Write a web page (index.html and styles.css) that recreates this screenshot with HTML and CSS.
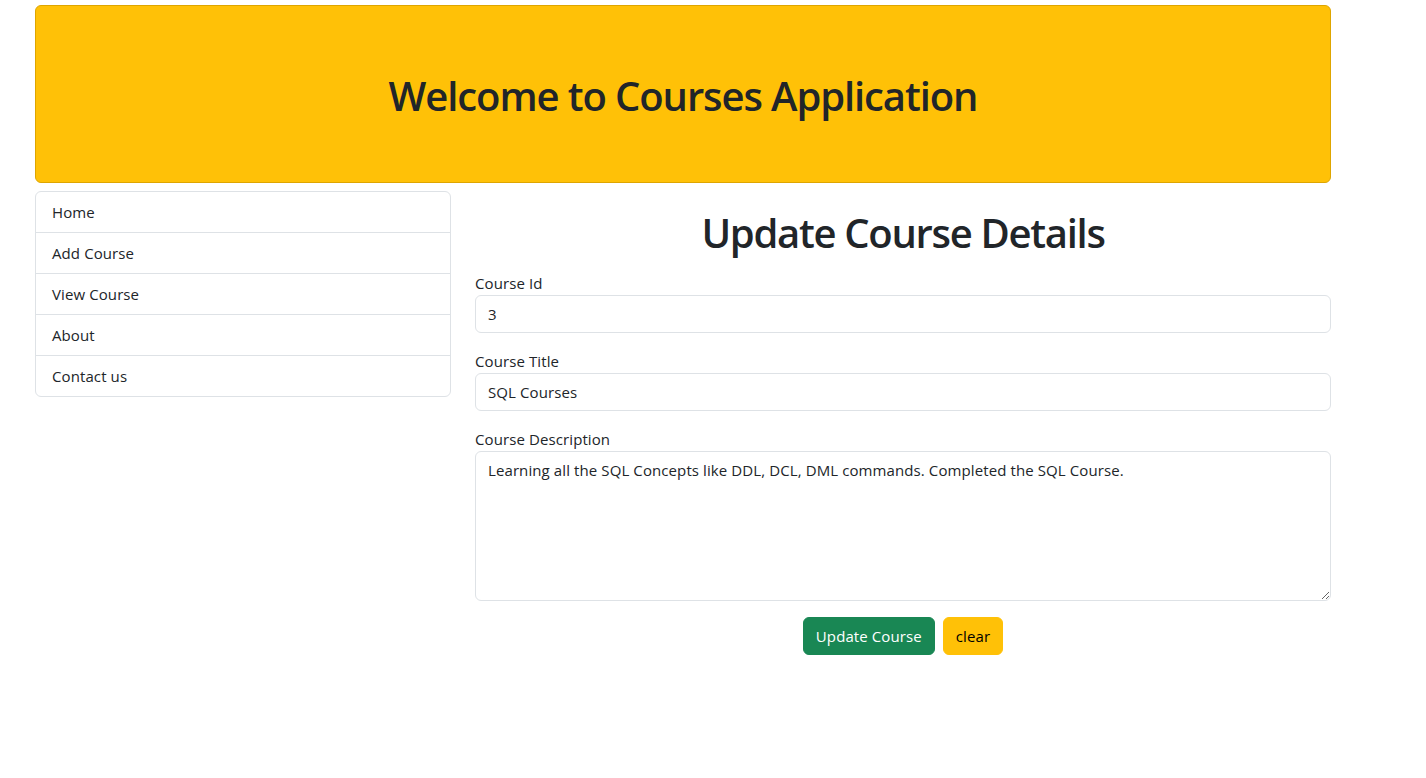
FILE: index.html
```html
<!DOCTYPE html>
<html lang="en">
<head>
<meta charset="utf-8">
<title>Courses Application</title>
<link rel="stylesheet" href="styles.css">
</head>
<body>
<div class="container">
  <header class="jumbotron">
    <h1 class="jumbo-title">Welcome to Courses Application</h1>
  </header>
  <div class="row">
    <aside class="col-side">
      <nav class="list-group">
        <a class="list-item" href="#">Home</a>
        <a class="list-item" href="#">Add Course</a>
        <a class="list-item" href="#">View Course</a>
        <a class="list-item" href="#">About</a>
        <a class="list-item" href="#">Contact us</a>
      </nav>
    </aside>
    <main class="col-main">
      <h1 class="page-title">Update Course Details</h1>
      <form class="form">
        <div class="field">
          <label class="label" for="cid">Course Id</label>
          <input class="control" id="cid" type="text" value="3">
        </div>
        <div class="field">
          <label class="label" for="ctitle">Course Title</label>
          <input class="control" id="ctitle" type="text" value="SQL Courses">
        </div>
        <div class="field">
          <label class="label" for="cdesc">Course Description</label>
          <textarea class="control textarea" id="cdesc">Learning all the SQL Concepts like DDL, DCL, DML commands. Completed the SQL Course.</textarea>
        </div>
        <div class="actions">
          <button type="button" class="btn btn-success">Update Course</button>
          <button type="reset" class="btn btn-warning">clear</button>
        </div>
      </form>
    </main>
  </div>
</div>
</body>
</html>
```
FILE: styles.css
```css
* { box-sizing: border-box; }
html, body {
  margin: 0;
  padding: 0;
  background: #fff;
}
body {
  font-family: "Open Sans", "Noto Sans", sans-serif;
  font-size: 16px;
  line-height: 1.5;
  color: #212529;
}
.container {
  width: 1296px;
  margin-left: 35px;
  padding-top: 5px;
}
.jumbotron {
  height: 178px;
  background: #ffc107;
  border: 1px solid #dea500;
  border-radius: 6px;
  display: flex;
  align-items: center;
  justify-content: center;
  margin-bottom: 8px;
}
.jumbo-title {
  margin: 0;
  font-size: 40px;
  font-weight: 600;
  line-height: 1.2;
  letter-spacing: -1.1px;
  padding-top: 4px;
}
.row {
  display: flex;
  gap: 24px;
  align-items: flex-start;
}
.col-side { width: 416px; flex: none; }
.col-main { width: 856px; flex: none; }
.list-group {
  display: flex;
  flex-direction: column;
  border: 1px solid #dee2e6;
  border-radius: 6px;
}
.list-item {
  display: block;
  height: 41px;
  padding: 8px 16px;
  color: #212529;
  text-decoration: none;
  font-size: 15px;
  line-height: 24px;
  letter-spacing: 0.1px;
  border-top: 1px solid #dee2e6;
}
.list-item:first-child { border-top: 0; height: 40px; }
.page-title {
  margin: 18px 0 14px;
  text-align: center;
  font-size: 40px;
  font-weight: 600;
  line-height: 48px;
  letter-spacing: -1.3px;
}
.form { display: flex; flex-direction: column; }
.field {
  display: flex;
  flex-direction: column;
  margin-bottom: 16px;
}
.label {
  font-size: 15px;
  line-height: 24px;
  letter-spacing: 0.1px;
}
.control {
  display: block;
  width: 100%;
  height: 38px;
  padding: 6px 12px;
  font-family: inherit;
  font-size: 15px;
  line-height: 24px;
  letter-spacing: 0.1px;
  color: #212529;
  background: #fff;
  border: 1px solid #dee2e6;
  border-radius: 6px;
  outline: none;
}
.textarea {
  height: 150px;
  resize: vertical;
}
.actions {
  display: flex;
  justify-content: center;
  gap: 8px;
}
.btn {
  height: 38px;
  padding: 6px 12px;
  font-family: inherit;
  font-size: 15px;
  line-height: 24px;
  letter-spacing: 0.1px;
  border: 1px solid transparent;
  border-radius: 6px;
  cursor: pointer;
}
.btn-success { background: #198754; border-color: #198754; color: #fff; }
.btn-warning { background: #ffc107; border-color: #ffc107; color: #000; }
```
